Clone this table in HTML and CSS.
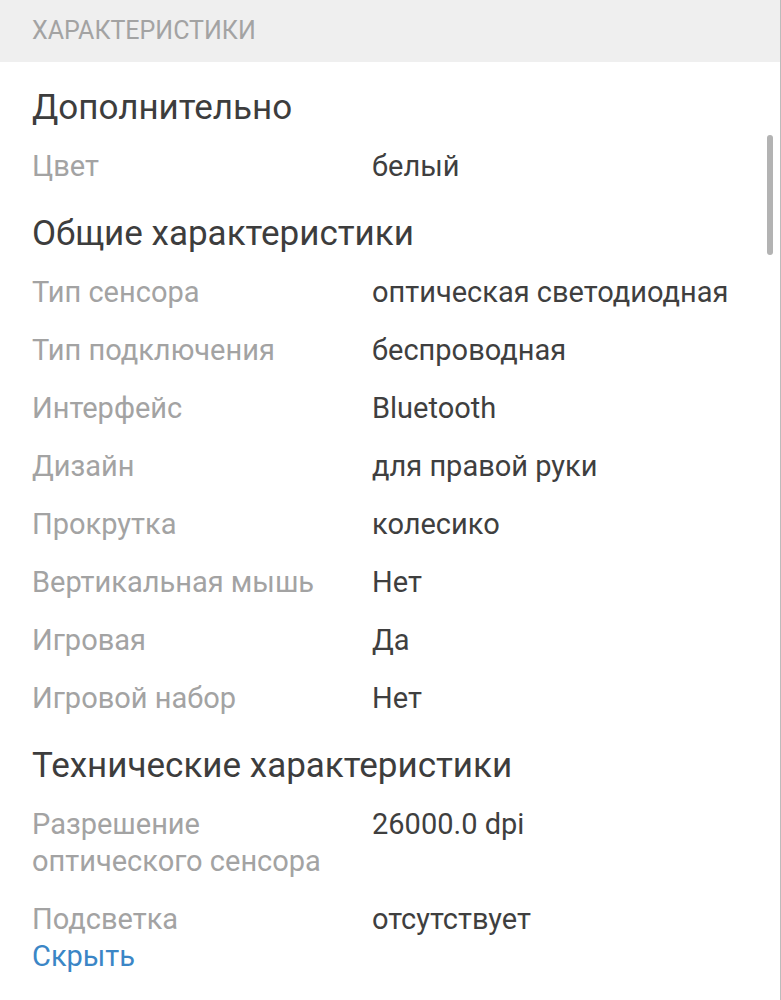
FILE: index.html
```html
<!DOCTYPE html>
<html lang="ru">
<head>
<meta charset="utf-8">
<link rel="stylesheet" href="styles.css">
</head>
<body>
<div class="page">
  <div class="header">ХАРАКТЕРИСТИКИ</div>
  <div class="content">
    <h2 class="title first">Дополнительно</h2>
    <div class="specs">
      <div class="label">Цвет</div><div class="value">белый</div>
    </div>
    <h2 class="title">Общие характеристики</h2>
    <div class="specs">
      <div class="label">Тип сенсора</div><div class="value">оптическая светодиодная</div>
      <div class="label">Тип подключения</div><div class="value">беспроводная</div>
      <div class="label">Интерфейс</div><div class="value">Bluetooth</div>
      <div class="label">Дизайн</div><div class="value">для правой руки</div>
      <div class="label">Прокрутка</div><div class="value">колесико</div>
      <div class="label">Вертикальная мышь</div><div class="value">Нет</div>
      <div class="label">Игровая</div><div class="value">Да</div>
      <div class="label">Игровой набор</div><div class="value">Нет</div>
    </div>
    <h2 class="title">Технические характеристики</h2>
    <div class="specs">
      <div class="label">Разрешение<br>оптического сенсора</div><div class="value">26000.0 dpi</div>
      <div class="label">Подсветка</div><div class="value">отсутствует</div>
    </div>
    <a class="hide" href="#">Скрыть</a>
  </div>
  <div class="scrollbar"></div>
</div>
</body>
</html>
```

FILE: styles.css
```css
* { box-sizing: border-box; }
html, body { margin: 0; padding: 0; background: #fff; }
body { font-family: Roboto, "Noto Sans", sans-serif; }
.page {
  position: relative;
  width: 781px;
  height: 1000px;
  border-right: 1px solid #bcbcbc;
  overflow: hidden;
}
.header {
  height: 62px;
  background: #efefef;
  color: #a3a3a3;
  font-size: 25px;
  line-height: 62px;
  padding-left: 32px;
}
.content { padding-left: 32px; }
.title {
  margin: 29px 0 20px;
  font-size: 35px;
  line-height: 40px;
  font-weight: 400;
  color: #3d3d3d;
}
.title.first { margin-top: 26px; }
.specs {
  display: grid;
  grid-template-columns: 340px auto;
  row-gap: 21px;
  font-size: 29px;
  line-height: 37px;
}
.label { color: #a3a3a3; }
.value { color: #3f3f3f; }
.hide {
  display: block;
  font-size: 29px;
  line-height: 37px;
  color: #3b86c6;
  text-decoration: none;
}
.scrollbar {
  position: absolute;
  top: 135px;
  right: 7px;
  width: 6px;
  height: 120px;
  border-radius: 3px;
  background: #b3b3b3;
}
```
